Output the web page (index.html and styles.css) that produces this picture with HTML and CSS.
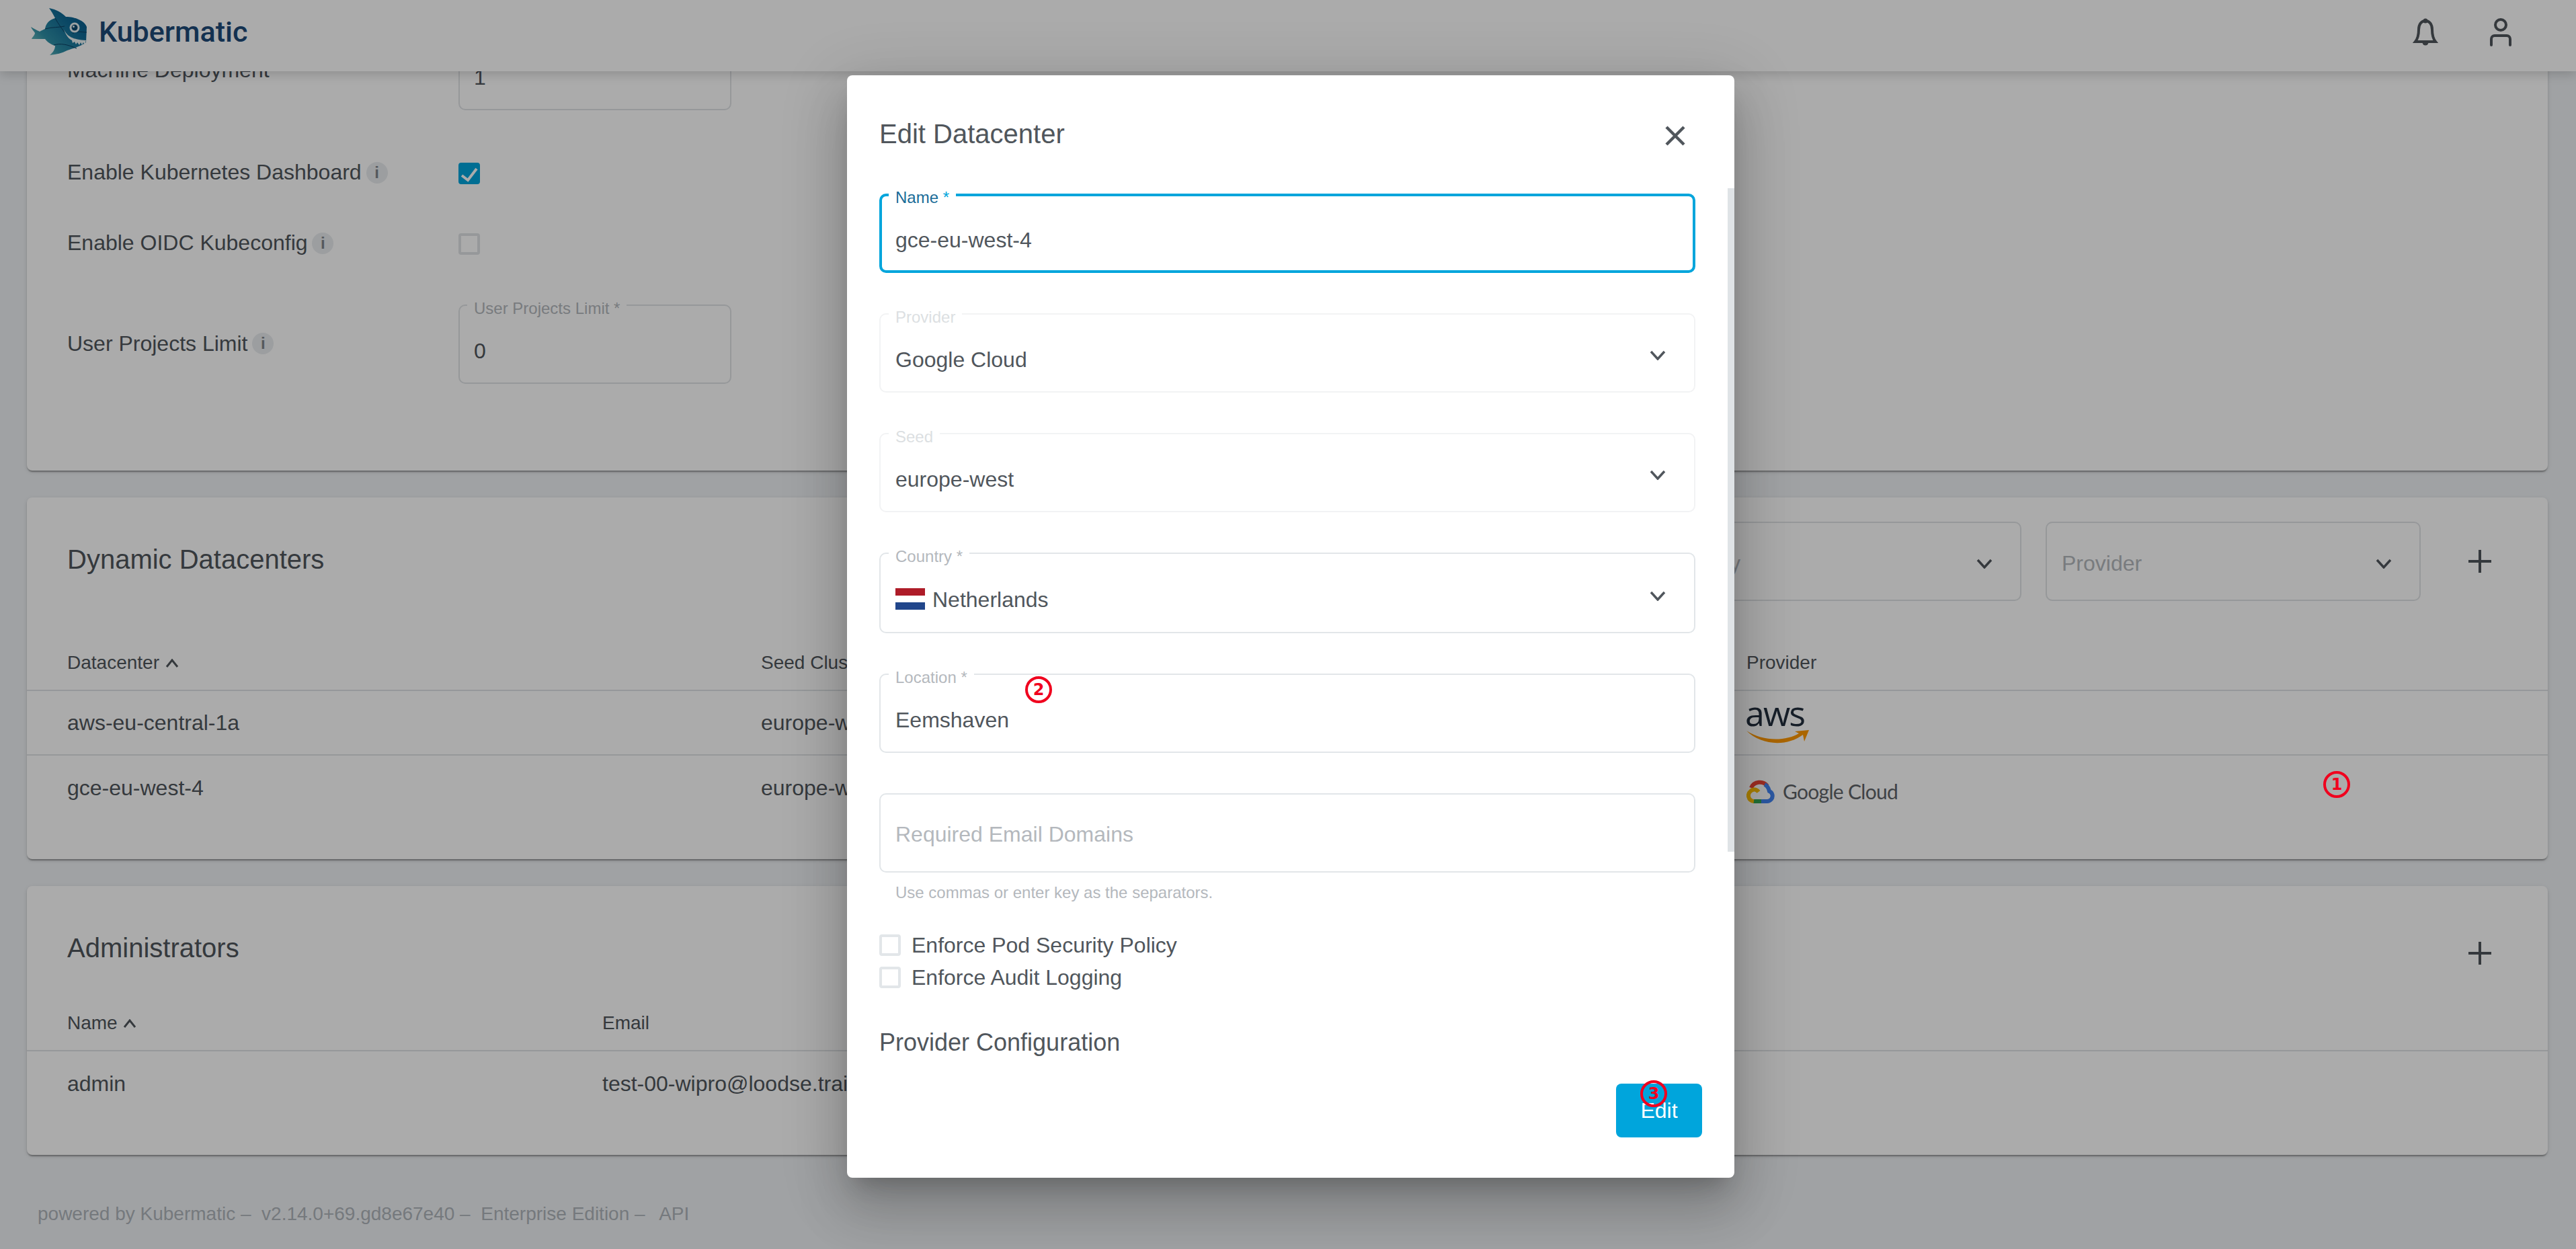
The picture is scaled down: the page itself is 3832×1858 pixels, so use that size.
FILE: index.html
```html
<!DOCTYPE html>
<html lang="en">
<head>
<meta charset="utf-8">
<title>Kubermatic - Edit Datacenter</title>
<link rel="stylesheet" href="styles.css">
</head>
<body>
<div class="page">
  <header class="topbar">
    <div class="brand">
      <svg class="fish" viewBox="0 0 84 71" width="84" height="71">
        <defs>
          <linearGradient id="fishfill" x1="0" y1="1" x2="1" y2="0.2">
            <stop offset="0" stop-color="#8fd6c8"/>
            <stop offset="0.35" stop-color="#2f8fa6"/>
            <stop offset="0.75" stop-color="#0f6a96"/>
            <stop offset="1" stop-color="#075a8c"/>
          </linearGradient>
        </defs>
        <path fill="url(#fishfill)" d="M27 0C38 2 46 7 52 13C66 13 80 19 83 28L82 51C72 58 62 60 54 63C46 67 38 69 28 70C33 66 36 61 36 56C29 54 24 50 21 46C14 46 7 46 1 46C3 42 6 40 6 37C4 34 1 31 0 28C7 32 11 34 13 35C16 33 19 32 21 31C22 24 26 18 36 15C33 9 30 4 27 0Z"/>
        <path fill="none" stroke="#0b3f63" stroke-width="1" d="M21 31C32 28 42 29 50 27M36 15C40 22 44 28 50 36M34 55C44 52 54 54 68 60M83 36C74 36 68 33 62 38"/>
        <circle cx="65" cy="29" r="7.5" fill="#e8f2f4"/>
        <circle cx="65" cy="29" r="4.5" fill="#0d4a70"/>
        <circle cx="63.5" cy="27.5" r="1.5" fill="#e8f2f4"/>
        <path fill="#eef5f5" d="M49 32C54 42 62 47 82 48L80 55L78 51L76 55L74 51L72 55L69 51L67 54L65 50L62 52L61 48C56 46 52 40 49 32Z"/>
      </svg>
      <span class="brand-name">Kubermatic</span>
    </div>
    <div class="top-icons">
      <svg class="bell" viewBox="0 0 40 44" width="40" height="44">
        <circle cx="20" cy="5" r="3.5" fill="#50565c"/>
        <path fill="none" stroke="#50565c" stroke-width="4" d="M5 36C9 31 10 25 10 18C10 10 14 5 20 5C26 5 30 10 30 18C30 25 31 31 35 36Z"/>
        <path fill="#50565c" d="M15.500 37h9a4.500 4.500 0 0 1-9 0Z"/>
      </svg>
      <svg class="person" viewBox="0 0 36 44" width="36" height="44">
        <circle cx="18" cy="11" r="8" fill="none" stroke="#50565c" stroke-width="4"/>
        <path fill="none" stroke="#50565c" stroke-width="4" stroke-linecap="round" d="M4 41V32a5 5 0 0 1 5-5h18a5 5 0 0 1 5 5V41"/>
      </svg>
    </div>
  </header>

  <main class="content">
    <div class="scrolled">
      <section class="card settings">
        <div class="setting first">
          <span class="setting-label">Machine Deployment</span>
          <div class="input"><span class="input-value">1</span></div>
        </div>
        <div class="setting gap-a">
          <span class="setting-label">Enable Kubernetes Dashboard <i class="info">i</i></span>
          <span class="page-check on">
            <svg viewBox="0 0 32 32" width="32" height="32"><path fill="none" stroke="#fff" stroke-width="4" d="M5 19l9 7L27 9"/></svg>
          </span>
        </div>
        <div class="setting gap-b">
          <span class="setting-label">Enable OIDC Kubeconfig <i class="info">i</i></span>
          <span class="page-check"></span>
        </div>
        <div class="setting gap-c">
          <span class="setting-label">User Projects Limit <i class="info">i</i></span>
          <div class="input">
            <span class="input-label">User Projects Limit *</span>
            <span class="input-value">0</span>
          </div>
        </div>
      </section>

      <section class="card datacenters">
        <div class="dc-head">
          <h2 class="card-title dc-title">Dynamic Datacenters</h2>
          <div class="filters">
            <div class="filter"><span>Country</span>
              <svg class="chev" viewBox="0 0 24 15" width="24" height="15"><path d="M2 2l10 11L22 2"/></svg>
            </div>
            <div class="filter"><span>Provider</span>
              <svg class="chev" viewBox="0 0 24 15" width="24" height="15"><path d="M2 2l10 11L22 2"/></svg>
            </div>
            <svg class="plus" viewBox="0 0 34 34" width="34" height="34"><path d="M17 0V34M0 17H34"/></svg>
          </div>
        </div>
        <div class="dc-row table-head">
          <span class="sorted">Datacenter <svg class="sort" viewBox="0 0 20 13" width="20" height="13"><path d="M2 12L10 2l8 10"/></svg></span><span>Seed Cluster</span><span>Provider</span>
        </div>
        <div class="dc-row table-row lined">
          <span>aws-eu-central-1a</span><span>europe-west</span>
          <svg class="aws" viewBox="0 0 94 56" width="94" height="56">
            <text x="-2" y="29" class="aws-word">aws</text>
            <path fill="#ff9900" d="M0 36C24 52 58 52 78 40L72 37L93 35L86 52L84 42C60 60 22 58 0 36Z"/>
          </svg>
        </div>
        <div class="dc-row table-row">
          <span>gce-eu-west-4</span><span>europe-west</span>
          <span class="gcloud">
            <svg viewBox="0 0 42 35" width="42" height="35">
              <path fill="none" stroke="#ea4335" stroke-width="6" d="M7 12C11 2 25 1 31 9"/>
              <path fill="none" stroke="#4285f4" stroke-width="6" d="M27 7C33 10 33 14 34 17C39 19 40 25 37 29C35 31 33 32 31 32H21"/>
              <path fill="none" stroke="#34a853" stroke-width="6" d="M22 32H10"/>
              <path fill="none" stroke="#fbbc05" stroke-width="6" d="M11 32C2 31 1 21 6 17C10 13 15 14 18 18"/>
            </svg>
            <span class="gcloud-word">Google Cloud</span>
          </span>
        </div>
      </section>

      <section class="card admins">
        <div class="admin-head">
          <h2 class="card-title">Administrators</h2>
          <svg class="plus admin-plus" viewBox="0 0 34 34" width="34" height="34"><path d="M17 0V34M0 17H34"/></svg>
        </div>
        <div class="admin-row table-head">
          <span class="sorted">Name <svg class="sort" viewBox="0 0 20 13" width="20" height="13"><path d="M2 12L10 2l8 10"/></svg></span><span>Email</span>
        </div>
        <div class="admin-row table-row">
          <span>admin</span><span>test-00-wipro@loodse.training</span>
        </div>
      </section>

      <footer class="foot">powered by Kubermatic –&nbsp; v2.14.0+69.gd8e67e40 –&nbsp; Enterprise Edition –&nbsp; <span class="foot-api">API</span></footer>
    </div>
  </main>
</div>

<div class="overlay"></div>

<div class="dialog">
  <div class="dialog-head">
    <h1 class="dialog-title">Edit Datacenter</h1>
    <svg class="close" viewBox="0 0 30 30" width="30" height="30"><path d="M2 2L28 28M28 2L2 28"/></svg>
  </div>
  <div class="dialog-body">
    <div class="thumb"></div>
    <div class="field focused">
      <span class="field-label">Name <em>*</em></span>
      <span>gce-eu-west-4</span>
    </div>
    <div class="field disabled">
      <span class="field-label">Provider</span>
      <span>Google Cloud</span>
      <svg class="chev" viewBox="0 0 24 15" width="24" height="15"><path d="M2 2l10 11L22 2"/></svg>
    </div>
    <div class="field disabled">
      <span class="field-label">Seed</span>
      <span>europe-west</span>
      <svg class="chev" viewBox="0 0 24 15" width="24" height="15"><path d="M2 2l10 11L22 2"/></svg>
    </div>
    <div class="field tall">
      <span class="field-label">Country *</span>
      <span class="country">
        <svg class="flag" viewBox="0 0 44 32" width="44" height="32">
          <rect width="44" height="11" fill="#ae1c28"/>
          <rect y="11" width="44" height="10" fill="#fff"/>
          <rect y="21" width="44" height="11" fill="#21468b"/>
        </svg>
        Netherlands
      </span>
      <svg class="chev" viewBox="0 0 24 15" width="24" height="15"><path d="M2 2l10 11L22 2"/></svg>
    </div>
    <div class="field">
      <span class="field-label">Location *</span>
      <span>Eemshaven</span>
    </div>
    <div class="field plain">
      <span class="placeholder">Required Email Domains</span>
    </div>
    <p class="hint">Use commas or enter key as the separators.</p>
    <div class="checks">
      <label class="check"><span class="box"></span>Enforce Pod Security Policy</label>
      <label class="check"><span class="box"></span>Enforce Audit Logging</label>
    </div>
    <h3 class="section-title">Provider Configuration</h3>
  </div>
  <div class="dialog-actions">
    <button class="edit">Edit</button>
  </div>
</div>

<span class="mark mark-1">1</span>
<span class="mark mark-2">2</span>
<span class="mark mark-3">3</span>
</body>
</html>
```

FILE: styles.css
```css
* { box-sizing: border-box; }
html, body { margin: 0; padding: 0; }
body {
  width: 3832px;
  height: 1858px;
  overflow: hidden;
  position: relative;
  background: #eff2f5;
  font-family: "Liberation Sans", Arial, sans-serif;
  font-size: 32px;
  color: #50565c;
}

/* top bar */
.topbar {
  position: relative;
  z-index: 2;
  height: 106px;
  background: #fff;
  box-shadow: 0 4px 16px rgba(0, 0, 0, .18);
  display: flex;
  align-items: center;
  justify-content: space-between;
  padding: 0 94px 0 46px;
}
.brand { display: flex; align-items: center; gap: 17px; height: 106px; }
.fish { display: block; margin-bottom: 12px; }
.brand-name {
  font-family: Roboto, sans-serif;
  font-weight: 500;
  font-size: 43px;
  color: #1d4a78;
  margin-bottom: 12px;
}
.top-icons { display: flex; align-items: center; gap: 74px; margin-bottom: 10px; }
.top-icons svg { display: block; }

/* scrolled page */
.content { height: 1752px; overflow: hidden; }
.scrolled { margin-top: -106px; padding: 0 42px 0 40px; }
.card {
  background: #fff;
  border-radius: 8px;
  box-shadow: 0 4px 2px -2px rgba(0, 0, 0, .2), 0 2px 2px 0 rgba(0, 0, 0, .14), 0 2px 6px 0 rgba(0, 0, 0, .12);
}
.settings { height: 700px; padding: 46px 0 0 60px; }
.setting { display: grid; grid-template-columns: 582px 406px; align-items: center; }
.gap-a { margin-top: 74px; height: 32px; }
.gap-b { margin-top: 73px; height: 32px; }
.gap-c { margin-top: 78px; }
.setting-label { display: flex; align-items: center; white-space: pre; margin-bottom: 2px; }
.info {
  width: 32px;
  height: 32px;
  margin-left: -2px;
  border-radius: 50%;
  background: #e9ecef;
  color: #7f858b;
  font: normal bold 24px/32px "Liberation Sans", sans-serif;
  text-align: center;
}
.input {
  position: relative;
  height: 118px;
  border: 2px solid #e0e3e6;
  border-radius: 10px;
  padding: 20px 0 0 21px;
  display: flex;
  align-items: center;
}
.input-label {
  position: absolute;
  left: 11px;
  top: -8px;
  padding: 0 10px;
  background: #fff;
  font-size: 24px;
  line-height: 24px;
  color: #b4b8bd;
}
.page-check {
  display: block;
  width: 32px;
  height: 32px;
  border: 4px solid #e0e3e6;
  border-radius: 4px;
}
.page-check svg { display: block; margin: -4px; }
.page-check.on { background: #00a5dc; border-color: #00a5dc; }

.datacenters { margin-top: 40px; height: 538px; padding-top: 36px; }
.dc-head {
  display: flex;
  justify-content: space-between;
  align-items: center;
  padding: 0 84px 0 60px;
}
.card-title { margin: 0; font-size: 40px; font-weight: 400; line-height: 46px; color: #50565c; }
.dc-title { margin-bottom: 6px; }
.filters { display: flex; align-items: center; gap: 36px; }
.filter {
  width: 558px;
  height: 118px;
  border: 2px solid #e0e3e6;
  border-radius: 10px;
  padding: 6px 41px 0 22px;
  display: flex;
  align-items: center;
  justify-content: space-between;
  color: #b4b8bd;
}
.filter:first-child { width: 554px; }
.chev { display: block; fill: none; stroke: #50565c; stroke-width: 3.500; }
.plus { display: block; fill: none; stroke: #50565c; stroke-width: 4; }
.filters .plus { margin-left: 35px; }

.dc-row { display: grid; grid-template-columns: 1032px 1466px 1fr; padding-left: 60px; align-items: center; }
.admin-row { display: grid; grid-template-columns: 796px 1fr; padding-left: 60px; align-items: center; }
.table-head { height: 82px; font-size: 28px; border-bottom: 2px solid #e0e3e6; }
.datacenters .table-head { margin-top: 52px; }
.table-row { height: 96px; }
.lined { border-bottom: 2px solid #e0e3e6; }
.sorted { display: flex; align-items: center; white-space: pre; }
.sort { display: block; margin-left: 1px; fill: none; stroke: #50565c; stroke-width: 3; }

.aws { display: block; margin-top: 8px; overflow: visible; }
.aws-word { font-family: "Open Sans", sans-serif; font-weight: 500; font-size: 52px; letter-spacing: -2px; fill: #232f3e; }
.gcloud { display: flex; align-items: center; gap: 12px; padding-top: 10px; }
.gcloud svg { display: block; }
.gcloud-word { font-family: Lato, sans-serif; font-size: 30px; letter-spacing: -.7px; color: #5f6368; }

.admins { margin-top: 40px; height: 400px; }
.admin-head {
  height: 164px;
  display: flex;
  justify-content: space-between;
  padding: 69px 84px 0 60px;
}
.admin-plus { margin-top: 14px; }

.foot {
  margin-top: 70px;
  padding-left: 16px;
  font-size: 28px;
  line-height: 36px;
  color: #afb5bb;
}
.foot-api { margin-left: 5px; }

/* modal */
.overlay {
  position: absolute;
  inset: 0;
  z-index: 3;
  background: rgba(0, 0, 0, .33);
}
.dialog {
  position: absolute;
  z-index: 4;
  left: 1260px;
  top: 112px;
  width: 1320px;
  height: 1640px;
  background: #fff;
  border-radius: 8px;
  overflow: hidden;
  display: flex;
  flex-direction: column;
  box-shadow: 0 22px 30px -14px rgba(0, 0, 0, .2), 0 48px 76px 6px rgba(0, 0, 0, .14), 0 18px 92px 16px rgba(0, 0, 0, .12);
}
.dialog-head {
  height: 168px;
  flex: none;
  display: flex;
  justify-content: space-between;
  padding: 64px 73px 0 48px;
}
.dialog-title { margin: 0; font-size: 40px; line-height: 46px; font-weight: 400; color: #50565c; }
.close { display: block; margin-top: 11px; fill: none; stroke: #50565c; stroke-width: 4.500; }
.dialog-body {
  position: relative;
  flex: 1;
  min-height: 0;
  overflow: hidden;
  padding: 8px 58px 0 48px;
}
.thumb { position: absolute; right: 0; top: 0; width: 10px; height: 987px; background: #dfe3e6; }
.field {
  position: relative;
  height: 118px;
  margin-bottom: 60px;
  border: 2px solid #e2e6e9;
  border-radius: 10px;
  padding: 20px 42px 0 22px;
  display: flex;
  align-items: center;
  justify-content: space-between;
}
.field .chev { margin-top: -14px; }
.tall { height: 120px; }
.tall .chev { margin-top: -12px; }
.field-label {
  position: absolute;
  left: 12px;
  top: -8px;
  padding: 0 10px;
  background: #fff;
  font-size: 24px;
  line-height: 24px;
  color: #b4b8bd;
}
.focused { border: 4px solid #00a5dc; padding-left: 20px; }
.focused .field-label { color: #1a6c98; top: -10px; left: 10px; }
.focused em { color: #00a5dc; font-style: normal; }
.disabled { border-color: #f2f3f4; }
.disabled .field-label { color: #dcdfe2; }
.country { display: flex; align-items: center; gap: 11px; }
.flag { display: block; margin-top: -2px; }
.plain { padding-top: 4px; margin-bottom: 0; }
.placeholder { color: #b4b8bd; }
.hint { margin: 16px 0 0; padding-left: 24px; font-size: 24px; line-height: 28px; color: #b4b8bd; }
.checks { margin-top: 48px; display: flex; flex-direction: column; gap: 16px; }
.check { display: flex; align-items: center; gap: 16px; height: 32px; }
.box { display: block; width: 32px; height: 32px; border: 4px solid #e2e6e9; border-radius: 4px; }
.section-title { margin: 60px 0 0; font-size: 36px; line-height: 42px; font-weight: 400; color: #50565c; }
.dialog-actions { flex: none; height: 140px; padding: 0 48px 0 0; display: flex; justify-content: flex-end; }
.edit {
  width: 128px;
  height: 80px;
  border: 0;
  border-radius: 8px;
  background: #00a5dc;
  color: #fff;
  font: 32px "Liberation Sans", sans-serif;
}

/* annotation marks sit over everything */
.mark {
  position: absolute;
  z-index: 5;
  width: 40px;
  height: 40px;
  border: 4px solid #f0001e;
  border-radius: 50%;
  color: #f0001e;
  font: bold 24px/32px "DejaVu Sans", sans-serif;
  text-align: center;
}
.mark-1 { left: 3456px; top: 1147px; }
.mark-2 { left: 1525px; top: 1006px; }
.mark-3 { left: 2440px; top: 1607px; }
```
